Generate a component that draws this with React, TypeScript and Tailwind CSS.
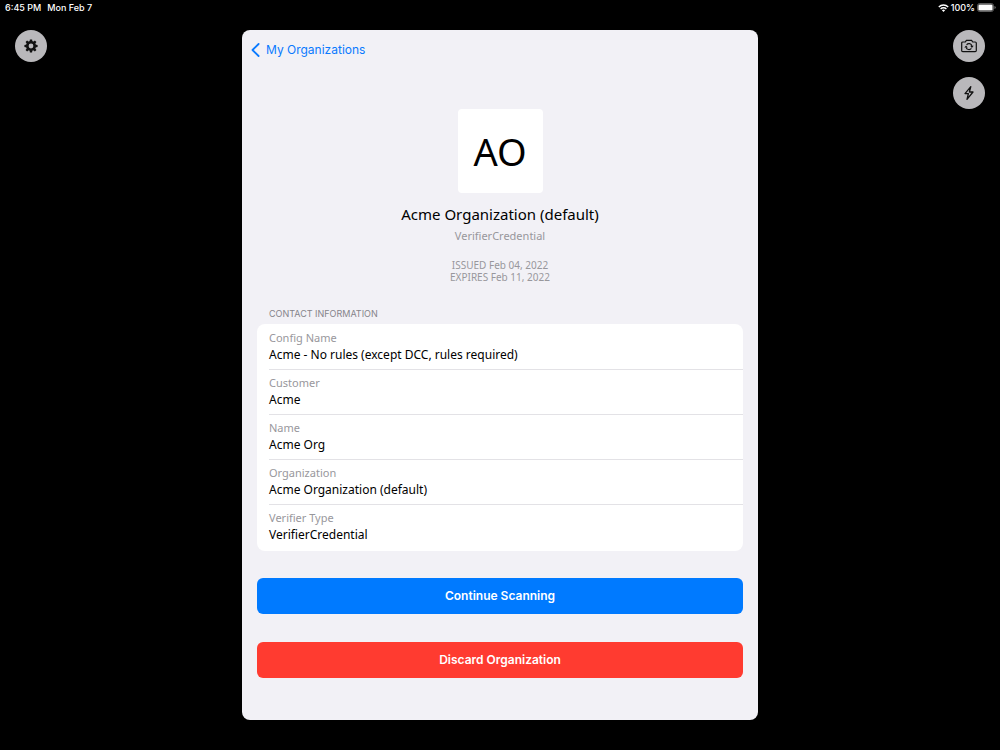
import React from 'react';

interface ContactField {
  label: string;
  value: string;
}

const contactFields: ContactField[] = [
  { label: 'Config Name', value: 'Acme - No rules (except DCC, rules required)' },
  { label: 'Customer', value: 'Acme' },
  { label: 'Name', value: 'Acme Org' },
  { label: 'Organization', value: 'Acme Organization (default)' },
  { label: 'Verifier Type', value: 'VerifierCredential' },
];

const GEAR_TEETH = [0, 45, 90, 135, 180, 225, 270, 315];

const GearIcon: React.FC = () => (
  <svg viewBox="0 0 14 14" className="w-3.5 h-3.5" aria-hidden="true">
    <circle cx="7" cy="7" r="3.7" fill="none" stroke="currentColor" strokeWidth="2.6" />
    {GEAR_TEETH.map(angle => (
      <path key={angle} d="M5.6 2.8 L5.9 0.4 H8.1 L8.4 2.8 Z" fill="currentColor" transform={`rotate(${angle} 7 7)`} />
    ))}
  </svg>
);

const CameraSwitchIcon: React.FC = () => (
  <svg viewBox="0 0 16 14" className="w-4 h-3.5" fill="none" stroke="currentColor" strokeLinejoin="round" aria-hidden="true">
    <path d="M1.8 3 H4.3 L5.4 1.4 H10.6 L11.7 3 H14.2 Q15.3 3 15.3 4.1 V11.5 Q15.3 12.6 14.2 12.6 H1.8 Q0.7 12.6 0.7 11.5 V4.1 Q0.7 3 1.8 3 Z" strokeWidth="1.2" />
    <path d="M5.6 5.8 A3 3 0 0 1 10.9 6.9 M10.4 9.4 A3 3 0 0 1 5.1 8.3" strokeWidth="1.2" />
    <path d="M3.3 8.6 H6.8 L5.1 6.4 Z M9.2 6.8 H12.7 L10.9 9 Z" fill="currentColor" stroke="none" />
  </svg>
);

const BoltIcon: React.FC = () => (
  <svg viewBox="0 0 12 16" className="w-3 h-4" fill="none" stroke="currentColor" strokeWidth="1.3" strokeLinejoin="round" aria-hidden="true">
    <path d="M7.8 1.6 L2 8.6 H5.4 L4 14.4 L10 7 H6.4 Z" />
  </svg>
);

const WifiIcon: React.FC = () => (
  <svg viewBox="0 0 11 8" className="w-[11px] h-2" fill="none" stroke="currentColor" strokeWidth="1.4" aria-hidden="true">
    <path d="M0.8 3 A6.7 6.7 0 0 1 10.2 3" />
    <path d="M2.6 4.9 A4.1 4.1 0 0 1 8.4 4.9" />
    <path d="M3.9 6.2 A2.3 2.3 0 0 1 7.1 6.2 L5.5 7.9 Z" fill="currentColor" stroke="none" />
  </svg>
);

const BatteryIcon: React.FC = () => (
  <svg viewBox="0 0 19 9" className="w-[19px] h-[9px]" aria-hidden="true">
    <rect x="0.5" y="0.5" width="16" height="8" rx="2.2" fill="none" stroke="#777777" strokeWidth="0.8" />
    <rect x="1.4" y="1.4" width="14.2" height="6.2" rx="1.3" fill="#ffffff" />
    <path d="M17.5 3 Q18.7 3.4 18.7 4.5 Q18.7 5.6 17.5 6 Z" fill="#777777" />
  </svg>
);

interface RoundButtonProps {
  label: string;
  children: React.ReactNode;
}

const RoundButton: React.FC<RoundButtonProps> = ({ label, children }) => (
  <button
    type="button"
    aria-label={label}
    className="flex items-center justify-center w-8 h-8 rounded-full bg-[#b9b8bb] text-[#111111]"
  >
    {children}
  </button>
);

const App: React.FC = () => {
  return (
    <div className="flex flex-col min-h-screen bg-black font-['Inter',sans-serif]">
      {/* Status bar */}
      <header className="flex items-center justify-between h-[15px] pl-[5px] pr-1 text-[9px] font-medium text-white">
        <div className="flex gap-1.5">
          <span>6:45 PM</span>
          <span>Mon Feb 7</span>
        </div>
        <div className="flex items-center gap-0.5">
          <WifiIcon />
          <span>100%</span>
          <BatteryIcon />
        </div>
      </header>

      <div className="flex items-start justify-between gap-4 px-[15px] pt-[15px] pb-[30px]">
        <RoundButton label="Settings">
          <GearIcon />
        </RoundButton>

        <main className="flex-1 max-w-[516px] px-[15px] pb-[42px] rounded-lg bg-[#f2f1f6]">
          <nav className="flex -mx-1.5 pt-2.5">
            <a href="#organizations" className="flex items-center gap-1.5 text-[12px] leading-5 text-[#0a7aff]">
              <svg viewBox="0 0 9 14" className="w-[9px] h-3.5" fill="none" stroke="currentColor" strokeWidth="1.8" strokeLinecap="round" strokeLinejoin="round" aria-hidden="true">
                <path d="M7.6 1 L1.5 7 L7.6 13" />
              </svg>
              My Organizations
            </a>
          </nav>

          {/* Organization summary */}
          <section className="flex flex-col items-center pt-[49px] font-['Noto_Sans',sans-serif] text-[#98979c]">
            <div className="flex items-center justify-center w-[85px] h-[84px] rounded bg-white text-[38px] text-black">
              AO
            </div>
            <h1 className="mt-[11px] text-[15px] leading-5 text-black">Acme Organization (default)</h1>
            <p className="mt-1 text-[11px] leading-4">VerifierCredential</p>
            <div className="mt-[15px] text-center text-[10px] leading-3">
              <p>ISSUED Feb 04, 2022</p>
              <p>EXPIRES Feb 11, 2022</p>
            </div>
          </section>

          {/* Contact information */}
          <section className="mt-[23px] font-['Noto_Sans',sans-serif]">
            <h2 className="pl-3 pb-0.5 font-['Inter',sans-serif] text-[9px] leading-4 text-[#85848a]">CONTACT INFORMATION</h2>
            <dl className="pl-3 pt-px rounded-lg bg-white">
              {contactFields.map(field => (
                <div key={field.label} className="pt-[5px] pb-[5px] border-b border-[#e3e2e6] last:border-b-0 last:pb-[7px]">
                  <dt className="text-[11px] leading-4 text-[#98979c]">{field.label}</dt>
                  <dd className="text-[12px] leading-[18px] text-black">{field.value}</dd>
                </div>
              ))}
            </dl>
          </section>

          {/* Actions */}
          <div className="flex flex-col gap-7 mt-[27px] text-[12px] font-semibold text-white">
            <button type="button" className="h-9 rounded-md bg-[#007aff]">Continue Scanning</button>
            <button type="button" className="h-9 rounded-md bg-[#ff3b30]">Discard Organization</button>
          </div>
        </main>

        <div className="flex flex-col gap-[15px]">
          <RoundButton label="Switch camera">
            <CameraSwitchIcon />
          </RoundButton>
          <RoundButton label="Toggle flash">
            <BoltIcon />
          </RoundButton>
        </div>
      </div>
    </div>
  );
};

export default App;
